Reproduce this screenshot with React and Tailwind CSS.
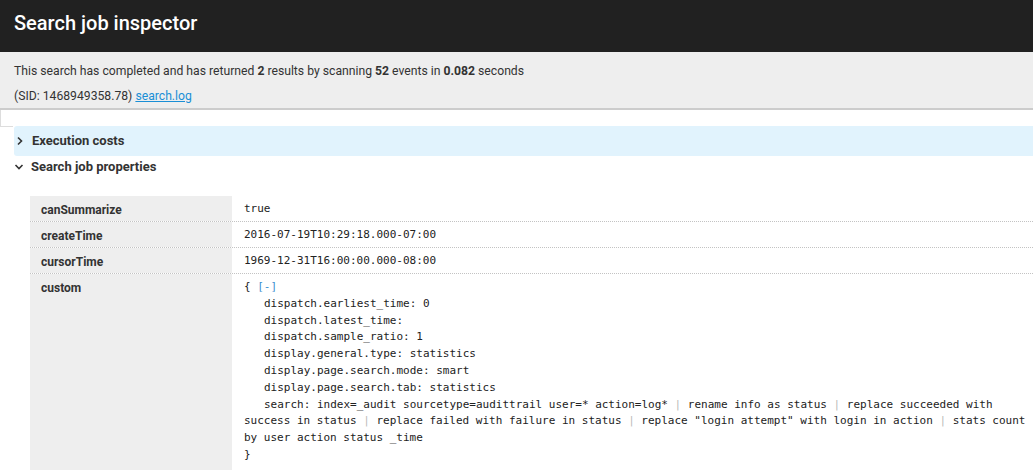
import React from 'react'

const sans = { fontFamily: 'Roboto, "Liberation Sans", sans-serif' }

const Pipe = () => <span className="text-[#bbb]">|</span>

const Chevron = ({ open }) => (
    <svg width="10" height="10" viewBox="0 0 10 10" className="shrink-0">
        {open ? (
            <path d="M1.5 3 L5 6.5 L8.5 3" fill="none" stroke="#333" strokeWidth="1.6" />
        ) : (
            <path d="M3 1.5 L6.5 5 L3 8.5" fill="none" stroke="#333" strokeWidth="1.6" />
        )}
    </svg>
)

const Row = ({ label, children }) => (
    <div className="flex border-b border-dotted border-[#c3c3c3]">
        <div className="w-[202px] shrink-0 bg-[#eeeeee] pl-[11px] pt-[6px] pb-[3px] text-[12px] leading-[16px] font-bold text-[#333]">
            {label}
        </div>
        <div className="flex-1 pl-[12px] pt-[5px] pb-[4px] font-['DejaVu_Sans_Mono',monospace] text-[11px] leading-[16px] text-[#222]">
            {children}
        </div>
    </div>
)

const customLines = [
    'dispatch.earliest_time: 0',
    'dispatch.latest_time:',
    'dispatch.sample_ratio: 1',
    'display.general.type: statistics',
    'display.page.search.mode: smart',
    'display.page.search.tab: statistics',
]

export default function App() {
    return (
        <div className="w-[1033px] h-[470px] overflow-hidden bg-white" style={sans}>
            <div className="h-[52px] bg-[#212121] flex items-center pl-[14px]">
                <h1 className="text-white text-[20px] font-medium pb-[6px]">Search job inspector</h1>
            </div>
            <div className="h-[58px] bg-[#eeeeee] border-b-2 border-[#cccccc] pl-[14px] pt-[11px] text-[12.2px] text-[#333] leading-[16px]">
                <p>
                    This search has completed and has returned <b>2</b> results by scanning <b>52</b> events in <b>0.082</b> seconds
                </p>
                <p className="mt-[9px]">
                    (SID: 1468949358.78) <a className="text-[#1a8fd6] underline">search.log</a>
                </p>
            </div>
            <div className="relative pt-[16px]">
                <div className="absolute left-0 top-0 w-[13px] h-[17px] border-l border-b border-[#dddddd]" />
                <div className="ml-[14px] h-[30px] bg-[#e1f3fd] rounded-l-[3px] flex items-center gap-[7px] pl-[1px]">
                    <Chevron />
                    <span className="text-[13px] font-bold text-[#333]">Execution costs</span>
                </div>
                <div className="ml-[14px] h-[22px] flex items-center gap-[7px]">
                    <Chevron open />
                    <span className="text-[13px] font-bold text-[#333]">Search job properties</span>
                </div>
                <div className="ml-[30px] mt-[18px]">
                    <Row label="canSummarize">true</Row>
                    <Row label="createTime">2016-07-19T10:29:18.000-07:00</Row>
                    <Row label="cursorTime">1969-12-31T16:00:00.000-08:00</Row>
                    <Row label="custom">
                        <div className="leading-[16.8px] pb-[20px]">
                            <div>
                                {'{ '}
                                <span className="text-[#3b8fd0]">[-]</span>
                            </div>
                            {customLines.map(line => (
                                <div key={line} className="indent-[20px]">{line}</div>
                            ))}
                            <div className="indent-[20px]">
                                search: index=_audit sourcetype=audittrail user=* action=log* <Pipe /> rename info as status <Pipe /> replace succeeded with success in status <Pipe /> replace failed with failure in status <Pipe /> replace "login attempt" with login in action <Pipe /> stats count by user action status _time
                            </div>
                            <div>{'}'}</div>
                        </div>
                    </Row>
                </div>
            </div>
        </div>
    )
}
